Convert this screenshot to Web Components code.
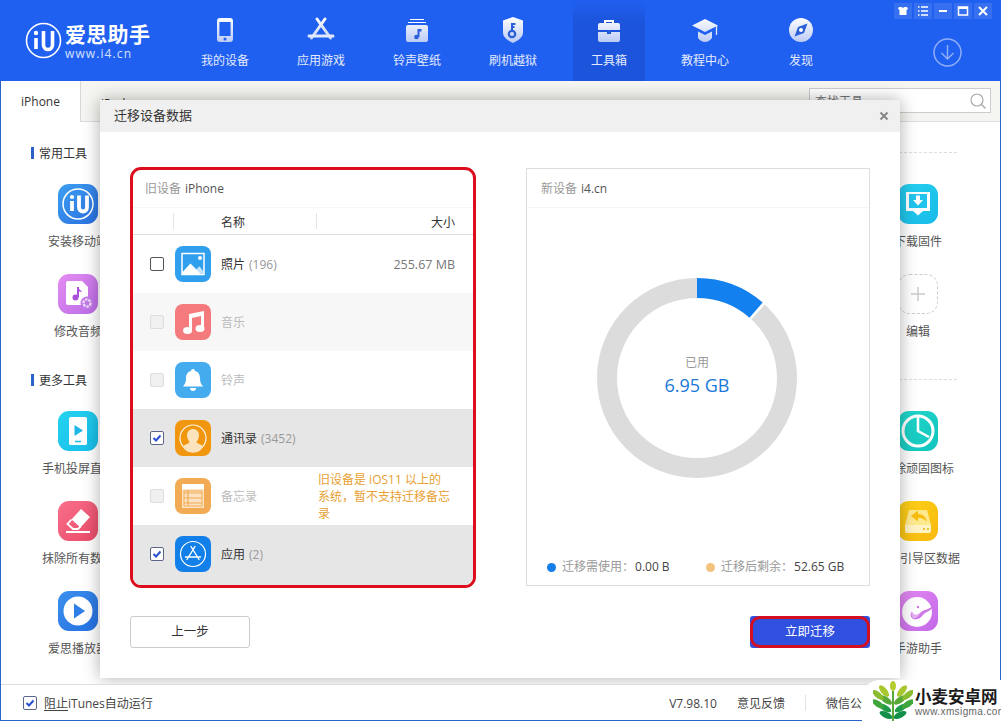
<!DOCTYPE html>
<html lang="zh">
<head>
<meta charset="utf-8">
<title>爱思助手</title>
<style>
  html, body { margin: 0; padding: 0; background: #fff; }
  body { font: 12px/18px "Open Sans", "Noto Sans CJK SC", sans-serif; color: #333; width: 1001px; height: 721px; overflow: hidden; }
</style>
</head>
<body>
<i4-app>
  <i4-header slot="header">
    <i4-nav label="我的设备" icon="phone"></i4-nav>
    <i4-nav label="应用游戏" icon="store"></i4-nav>
    <i4-nav label="铃声壁纸" icon="ring"></i4-nav>
    <i4-nav label="刷机越狱" icon="shield"></i4-nav>
    <i4-nav label="工具箱" icon="box" active></i4-nav>
    <i4-nav label="教程中心" icon="hat"></i4-nav>
    <i4-nav label="发现" icon="compass"></i4-nav>
  </i4-header>
  <i4-tabs slot="tabs"></i4-tabs>
  <i4-section title="常用工具">
    <i4-tool-row><i4-tool label="安装移动端" icon="iu"></i4-tool><i4-tool label="下载固件" icon="firmware"></i4-tool></i4-tool-row>
    <i4-tool-row><i4-tool label="修改音频" icon="audio"></i4-tool><i4-tool label="编辑" icon="add"></i4-tool></i4-tool-row>
  </i4-section>
  <i4-section title="更多工具" style="margin-top:7px">
    <i4-tool-row><i4-tool label="手机投屏直播" icon="cast"></i4-tool><i4-tool label="删除顽固图标" icon="clock"></i4-tool></i4-tool-row>
    <i4-tool-row><i4-tool label="抹除所有数据" icon="erase"></i4-tool><i4-tool label="修复引导区数据" icon="disk"></i4-tool></i4-tool-row>
    <i4-tool-row><i4-tool label="爱思播放器" icon="play"></i4-tool><i4-tool label="手游助手" icon="game"></i4-tool></i4-tool-row>
  </i4-section>
  <i4-footer slot="footer"></i4-footer>
  <i4-dialog slot="overlay"></i4-dialog>
  <i4-watermark slot="overlay"></i4-watermark>
</i4-app>

<script>
const FONT = '"Open Sans", "Noto Sans CJK SC", sans-serif';

/* header icons, 30x30 box, white fading to pale blue */
const navFill = `<defs><linearGradient id="g" gradientUnits="userSpaceOnUse" x1="0" y1="2" x2="0" y2="28"><stop offset="0" stop-color="#fff"/><stop offset="1" stop-color="#b9c9f5"/></linearGradient></defs>`;
const NAV = {
  phone: `<path fill="url(#g)" fill-rule="evenodd" d="M10 3h10a3 3 0 0 1 3 3v18a3 3 0 0 1-3 3H10a3 3 0 0 1-3-3V6a3 3 0 0 1 3-3zm-.6 4v14h11.200V7z"/><circle cx="15" cy="24" r="1.500" fill="#2060f0"/>`,
  store: `<path fill="none" stroke="url(#g)" stroke-width="3" stroke-linecap="round" d="M11 4l13.500 19M19 4L5.500 23"/><path fill="none" stroke="#e2e9fd" stroke-width="3" stroke-linecap="round" d="M3 21h24"/>`,
  ring: `<path fill="#fff" d="M8 4h14v1H8zM6 7h18v1H6z"/><rect x="4" y="10" width="22" height="17" rx="2" fill="url(#g)"/><path fill="none" stroke="#2a5fd8" stroke-width="2" d="M16.500 14v8"/><circle cx="14.500" cy="22" r="2.300" fill="#2a5fd8"/><path d="M16.500 14h3v2.500h-3z" fill="#2a5fd8"/>`,
  shield: `<path fill="url(#g)" d="M15 2l10 3.500v12c0 5-5 8-10 10.500C10 25.500 5 22.500 5 17.500v-12z"/><circle cx="14" cy="19" r="3.200" fill="none" stroke="#2a5fd8" stroke-width="2.200"/><path d="M14 16V8M14 9h3.500M14 12h2.500" fill="none" stroke="#2a5fd8" stroke-width="2"/>`,
  box: `<path fill="none" stroke="#fff" stroke-width="2" d="M11 9V6h8v3"/><path fill="url(#g)" d="M6 8h18a2 2 0 0 1 2 2v5H4v-5a2 2 0 0 1 2-2zM4 17h9v2h4v-2h9v8a2 2 0 0 1-2 2H6a2 2 0 0 1-2-2z"/><rect x="13.700" y="15" width="2.600" height="3" fill="#2a5fd8"/>`,
  hat: `<path fill="url(#g)" d="M15 4l13 6.500L15 17 2 10.500zM8 16.500l7 3.500 7-3.500V23c-2 2.500-4.500 4-7 4s-5-1.500-7-4z"/><path fill="none" stroke="#dfe7fb" stroke-width="1.300" d="M26.500 11v9"/>`,
  compass: `<circle cx="15" cy="15" r="12" fill="url(#g)"/><path fill="#2a5fd8" d="M21.500 8.500L18 18l-9.500 3.500L12 12z"/><circle cx="15" cy="15" r="2" fill="#fff"/>`
};

/* tool tiles, 40x40 */
const tile = (a, b, body) => `<svg viewBox="0 0 40 40" width="40" height="40"><defs><linearGradient id="t" x1="0" y1="0" x2="1" y2="1"><stop offset="0" stop-color="${a}"/><stop offset="1" stop-color="${b}"/></linearGradient></defs><rect width="40" height="40" rx="11" fill="url(#t)"/>${body}</svg>`;
const TOOL = {
  iu: tile('#3d9ff0', '#2a6fe0', `<circle cx="20" cy="20" r="15" fill="none" stroke="#fff" stroke-width="1.500"/><path fill="none" stroke="#fff" stroke-width="3.800" d="M14 17v10M21 11.500v12a4 4 0 0 0 8 0v-12"/><circle cx="14" cy="13" r="2.100" fill="#fff"/>`),
  audio: tile('#e58cf2', '#b96be6', `<path fill="#fff" d="M10 7h14l6 6v16a2 2 0 0 1-2 2H10a2 2 0 0 1-2-2V9a2 2 0 0 1 2-2z"/><path fill="none" stroke="#a94fdc" stroke-width="2" d="M20 13v10"/><circle cx="17.500" cy="23.500" r="3" fill="#a94fdc"/><path fill="#a94fdc" d="M20 13c1 3 3 3 4 5-2 0-3-1-4-1z"/><circle cx="29" cy="29" r="6.500" fill="#c27ae8"/><circle cx="29" cy="29" r="3.500" fill="none" stroke="#f0dcf8" stroke-width="2.400" stroke-dasharray="2.500 1"/>`),
  cast: tile('#25d3f0', '#18bce8', `<rect x="11" y="6" width="18" height="28" rx="1.500" fill="#fff"/><path fill="#1eb8e6" d="M16.500 14l8.500 5.500-8.500 5.500z"/><path stroke="#1eb8e6" stroke-width="1.500" d="M17 30.500h6"/>`),
  erase: tile('#f8708c', '#ea4a68', `<path fill="#fff" d="M23 8l9 8-9.500 10.500-9-8z"/><path fill="none" stroke="#fff" stroke-width="1.800" d="M13.500 18.500l-4 4.500 5.500 5h5l2.500-2.500"/><path stroke="#fff" stroke-width="2" d="M8 31h24"/>`),
  play: tile('#3b8fec', '#2670e2', `<circle cx="20" cy="20" r="14.500" fill="#fff"/><path fill="#2f7fe6" d="M16 12.500L27 20l-11 7.500z"/>`),
  firmware: tile('#26d0f0', '#18bbe8', `<path fill="#fff" d="M8 8h24v19h-7l-5 4.500-5-4.500H8z"/><rect x="11" y="10" width="18" height="14" fill="#22c4ec"/><path fill="#fff" d="M18 11.500h4v4.500h3l-5 5.500-5-5.500h3z"/>`),
  add: `<svg viewBox="0 0 40 40" width="40" height="40"><rect x=".5" y=".5" width="39" height="39" rx="11" fill="#fff" stroke="#ccc" stroke-dasharray="3 2"/><path stroke="#ccc" stroke-width="1.500" d="M20 13v14M13 20h14"/></svg>`,
  clock: tile('#22d8cc', '#12c4bc', `<circle cx="20" cy="20" r="15" fill="none" stroke="#fff" stroke-width="3"/><path fill="none" stroke="#fff" stroke-width="2.500" d="M20 6v14l11 6"/>`),
  disk: tile('#fdd21a', '#f8b80e', `<path fill="#ffe98e" d="M7 24l4-15h18l4 15z"/><path fill="#fff3c4" d="M7 24h26v6a2 2 0 0 1-2 2H9a2 2 0 0 1-2-2z"/><path fill="#f9bd10" d="M13 15l7-5.500v3.500c5 0 8 3 9 8-3-3.500-5-4-9-4v3.500z"/><circle cx="26" cy="28" r="1" fill="#f0b010"/><circle cx="30" cy="28" r="1" fill="#f0b010"/>`),
  game: tile('#e48af2', '#c268e8', `<circle cx="19" cy="21" r="15" fill="#fff"/><path fill="#cf78e8" d="M36 14C33 21 28 20 25 24c-3 4-8 6-11 3-2-2-1.500-5 0-6.500 1 4 5 4.500 8 1.500 4-4 9-3 14-8z"/><path fill="#e3b0f2" d="M15 27c-2-2-1.500-5-1-6.500 1 4 5 4.500 8 1.500-1 3-4 6-7 5z"/><circle cx="20" cy="16" r="1.200" fill="#cf78e8"/>`)
};

/* device data rows, 36x36 */
const app = (c, body) => `<svg viewBox="0 0 36 36" width="36" height="36"><rect width="36" height="36" rx="8" fill="${c}"/>${body}</svg>`;
const APP = {
  photos: app('#2f9fee', `<rect x="7" y="7.500" width="22" height="21" fill="none" stroke="#fff" stroke-width="1.500"/><path fill="#fff" d="M7.500 26l8-8.500 6 6 3-3 4 5.500v2h-21z"/><path fill="#bfe2fa" d="M21.500 23.500l3-3 4 5.500v2h-3z"/><circle cx="25" cy="12" r="2" fill="#fff"/>`),
  music: app('#f57a7e', `<path fill="#fff" d="M14 10l15-3v17h-3V12l-9 2v13h-3z"/><ellipse cx="12.500" cy="26.500" rx="4.500" ry="3.500" fill="#fff"/><ellipse cx="25" cy="24.500" rx="4.500" ry="3.500" fill="#fff"/>`),
  bell: app('#44abef', `<path fill="#fff" d="M18 7a2 2 0 0 1 2 2c4 1 5 4 5 8 0 4 2 6 3 7.500H8c1-1.500 3-3.500 3-7.500 0-4 1-7 5-8a2 2 0 0 1 2-2z"/><path fill="#fff" d="M15 26h6a3 3 0 0 1-6 0z"/>`),
  person: app('#f0960f', `<circle cx="18" cy="18" r="13" fill="none" stroke="#fff" stroke-width="1.200" opacity=".9"/><path fill="#fbe3bd" d="M18 9c4 0 6 3 6 6.500 0 3-1.500 5-2.500 6.500 1 2 5 2.500 7 4.500a12 12 0 0 1-21 0c2-2 6-2.500 7-4.500-1-1.500-2.500-3.500-2.500-6.500C12 12 14 9 18 9z"/>`),
  notes: app('#f2aa55', `<rect x="7" y="6" width="22" height="24" fill="#fbe3c3"/><rect x="7" y="6" width="22" height="5" fill="#fff"/><path stroke="#f2aa55" stroke-width="1.200" d="M9 15h18M9 20h18M9 25h18M13 12v16" /><rect x="9" y="13" width="18" height="15" fill="none" stroke="#f2aa55" stroke-width="1"/>`),
  apps: app('#1280e8', `<circle cx="18" cy="18" r="12.500" fill="none" stroke="#fff" stroke-width="1.200"/><path fill="none" stroke="#fff" stroke-width="1.400" stroke-linecap="round" d="M16 10.500l8 13M20 10.500l-8 13M10.500 21h15"/>`)
};

class I4App extends HTMLElement {
  constructor() {
    super();
    this.attachShadow({ mode: "open" }).innerHTML = `
<style>
  :host { display: flex; flex-direction: column; width: 1001px; height: 721px; position: relative; box-sizing: border-box; overflow: hidden; font: 12px/18px ${FONT}; }
  .frame { flex: 1; display: flex; flex-direction: column; min-height: 0; border: 1px solid #2b62c8; border-width: 0 1px 1px; }
  main { flex: 1; min-height: 0; padding: 22px 22px 0 17px; background: #fff; overflow: hidden; }
  ::slotted([slot=header]), ::slotted([slot=footer]) { position: relative; z-index: 2; }
</style>
<slot name="header"></slot>
<div class="frame">
  <slot name="tabs"></slot>
  <main><slot></slot></main>
  <slot name="footer"></slot>
</div>
<slot name="overlay"></slot>`;
  }
}

class I4Header extends HTMLElement {
  constructor() {
    super();
    this.attachShadow({ mode: "open" }).innerHTML = `
<style>
  :host { display: flex; height: 81px; background: #2060f0; color: #e4ebfd; }
  .logo { width: 177px; flex: none; display: flex; align-items: center; padding: 0 0 0 25px; box-sizing: border-box; gap: 3px; }
  .name { font-weight: 700; font-size: 21px; line-height: 22px; letter-spacing: .3px; color: #fff; margin-top: 3px; }
  .url { font-size: 12px; line-height: 14px; letter-spacing: 1.100px; color: #d6e1fc; margin-top: 2px; }
  nav { display: flex; }
  .side { margin-left: auto; display: flex; flex-direction: column; align-items: flex-end; padding: 3px 9px 0 0; }
  .win { display: flex; gap: 2px; }
  .win span { width: 18px; height: 16px; background: rgba(255,255,255,.1); display: grid; place-items: center; }
  .dl { margin: 19px 30px 0 0; display: block; }
</style>
<div class="logo">
  <svg width="37" height="37" viewBox="0 0 37 37"><circle cx="18.500" cy="18.500" r="17" fill="none" stroke="#fff" stroke-width="1.600"/><path fill="none" stroke="#fff" stroke-width="3.600" d="M11 16v11M18.500 9v14a4.500 4.500 0 0 0 9 0V9"/><circle cx="11" cy="11" r="2.200" fill="#fff"/></svg>
  <div><div class="name">爱思助手</div><div class="url">www.i4.cn</div></div>
</div>
<nav><slot></slot></nav>
<div class="side">
  <div class="win">
    <span><svg width="12" height="12" viewBox="0 0 12 12"><path fill="#fff" d="M2 2h2.500c.5 1 2.500 1 3 0H10l1 2-1.500 1v5h-7V5L1 4z"/></svg></span>
    <span><svg width="12" height="12" viewBox="0 0 12 12"><path stroke="#fff" stroke-width="1.500" d="M1 2h1.500M4 2h7M1 6h1.500M4 6h7M1 10h1.500M4 10h7"/></svg></span>
    <span><svg width="12" height="12" viewBox="0 0 12 12"><path stroke="#fff" stroke-width="2" d="M2 6h8"/></svg></span>
    <span><svg width="12" height="12" viewBox="0 0 12 12"><rect x="1.500" y="2" width="9" height="8" fill="none" stroke="#fff" stroke-width="1.500"/><path stroke="#fff" stroke-width="2" d="M1.500 3h9"/></svg></span>
    <span><svg width="12" height="12" viewBox="0 0 12 12"><path stroke="#fff" stroke-width="2" d="M2 2l8 8M10 2l-8 8"/></svg></span>
  </div>
  <svg class="dl" width="29" height="29" viewBox="0 0 29 29"><circle cx="14.500" cy="14.500" r="13.500" fill="none" stroke="#8fadf7" stroke-width="1.500"/><path fill="none" stroke="#8fadf7" stroke-width="1.500" d="M14.500 7v14M8.500 15l6 6 6-6"/></svg>
</div>`;
  }
}

class I4Nav extends HTMLElement {
  connectedCallback() {
    if (this.shadowRoot) return;
    this.attachShadow({ mode: "open" }).innerHTML = `
<style>
  :host { display: flex; flex-direction: column; align-items: center; width: 96px; }
  .in { width: 72px; height: 81px; display: flex; flex-direction: column; align-items: center; padding-top: 15px; box-sizing: border-box; }
  :host([active]) .in { background: linear-gradient(#2060f0, #1c55dc 25%); }
  svg { display: block; }
  span { margin-top: 7px; font-size: 12px; line-height: 18px; white-space: nowrap; }
</style>
<div class="in">
  <svg width="30" height="30" viewBox="0 0 30 30">${navFill}${NAV[this.getAttribute('icon')]}</svg>
  <span>${this.getAttribute('label')}</span>
</div>`;
  }
}

class I4Tabs extends HTMLElement {
  constructor() {
    super();
    this.attachShadow({ mode: "open" }).innerHTML = `
<style>
  :host { display: flex; height: 41px; background: #f5f5f2; border-bottom: 1px solid #ddd; box-sizing: border-box; }
  .tab { width: 80px; height: 41px; background: #fff; border-right: 1px solid #d8d8d8; box-sizing: border-box; display: grid; place-items: center; font-size: 12px; color: #333; padding-top: 1px; }
  .t2 { margin-left: 20px; line-height: 45px; height: 39px; font-size: 12px; color: #333; }
  .search { margin: 7px 9px 0 auto; width: 182px; height: 25px; background: #fff; border: 1px solid #ccc; box-sizing: border-box; display: flex; align-items: center; justify-content: space-between; padding: 2px 3px 0 5px; color: #777; }
  .search svg { margin-top: -2px; }
</style>
<div class="tab">iPhone</div>
<div class="t2">iPad</div>
<div class="search"><span>查找工具</span>
  <svg width="18" height="18" viewBox="0 0 18 18"><circle cx="8" cy="8" r="6" fill="none" stroke="#aaa" stroke-width="1.200"/><path stroke="#aaa" stroke-width="1.400" d="M12.500 12.500l4 4"/></svg>
</div>`;
  }
}

class I4Section extends HTMLElement {
  connectedCallback() {
    if (this.shadowRoot) return;
    this.attachShadow({ mode: "open" }).innerHTML = `
<style>
  :host { display: block; }
  .title { display: flex; align-items: center; height: 18px; margin: 0 0 22px 13px; color: #333; }
  .title span { padding-top: 2px; }
  .bar { width: 3px; height: 12px; background: #2a62c8; margin-right: 5px; }
  .line { flex: 1; border-top: 1px dashed #ddd; margin: 0 21px 2px 20px; }
</style>
<div class="title"><i class="bar"></i><span>${this.getAttribute('title')}</span><i class="line"></i></div>
<slot></slot>`;
  }
}

class I4ToolRow extends HTMLElement {
  constructor() {
    super();
    this.attachShadow({ mode: "open" }).innerHTML = `
<style>:host { display: flex; justify-content: space-between; height: 90px; }</style><slot></slot>`;
  }
}

class I4Tool extends HTMLElement {
  connectedCallback() {
    if (this.shadowRoot) return;
    this.attachShadow({ mode: "open" }).innerHTML = `
<style>
  :host { display: flex; flex-direction: column; align-items: center; width: 120px; color: #555; }
  svg { display: block; flex: none; }
  span { margin-top: 9px; white-space: nowrap; }
</style>
${TOOL[this.getAttribute('icon')]}
<span>${this.getAttribute('label')}</span>`;
  }
}

class I4Check extends HTMLElement {
  connectedCallback() {
    if (this.shadowRoot) return;
    const on = this.hasAttribute('checked');
    this.attachShadow({ mode: "open" }).innerHTML = `
<style>
  :host { display: block; width: 14px; height: 14px; box-sizing: border-box; border: 1px solid #555; border-radius: 2px; background: #fff; flex: none; }
  :host([checked]) { border-color: #5c6788; }
  :host([disabled]) { border-color: #ddd; background: #f0f0f0; }
  svg { display: block; }
</style>
${on ? `<svg width="12" height="12" viewBox="0 0 12 12"><path fill="none" stroke="#2b50d0" stroke-width="2" d="M2.500 6l2.500 2.500 4.500-5"/></svg>` : ''}`;
  }
}

class I4Row extends HTMLElement {
  connectedCallback() {
    if (this.shadowRoot) return;
    const count = this.getAttribute('count'), size = this.getAttribute('size');
    this.attachShadow({ mode: "open" }).innerHTML = `
<style>
  :host { display: flex; align-items: center; height: 58px; flex: none; background: #fff; padding: 0 18px 0 17px; box-sizing: border-box; color: #333; }
  :host([tone=soft]) { background: #f7f7f7; }
  :host([tone=on]) { background: #e6e6e6; }
  :host(:last-child) { flex: 1; padding-bottom: 2px; }
  :host([disabled]) .name { color: #bbb; }
  svg { display: block; margin: 0 10px 0 11px; flex: none; }
  .name, .n, .size { padding-top: 2px; }
  .n { color: #999; margin-left: 4px; }
  .size { margin-left: auto; color: #777; font-size: 12.500px; }
  .note { margin-left: auto; width: 133px; margin-right: 4px; color: #e8a032; line-height: 17px; }
</style>
<i4-check ${this.hasAttribute('checked') ? 'checked' : ''} ${this.hasAttribute('disabled') ? 'disabled' : ''}></i4-check>
${APP[this.getAttribute('icon')]}
<span class="name">${this.getAttribute('label')}</span>${count ? `<span class="n">(${count})</span>` : ''}
${size ? `<span class="size">${size}</span>` : ''}<slot></slot>`;
    if (this.textContent.trim()) {
      const s = document.createElement('div');
      s.className = 'note';
      s.innerHTML = '<slot></slot>';
      this.shadowRoot.querySelector('slot').replaceWith(s);
    }
  }
}

class I4OldDevice extends HTMLElement {
  constructor() {
    super();
    this.attachShadow({ mode: "open" }).innerHTML = `
<style>
  :host { display: flex; flex-direction: column; width: 346px; height: 421px; box-sizing: border-box; border: 3px solid #dc0d1c; border-radius: 11px; overflow: hidden; background: #fff; flex: none; }
  .head { height: 38px; flex: none; display: flex; align-items: center; padding-left: 12px; color: #999; border-bottom: 1px solid #f6f6f6; box-sizing: border-box; }
  .head b { font-weight: 400; color: #555; margin-left: 4px; }
  .cols { height: 27px; flex: none; display: flex; align-items: center; border-bottom: 1px solid #ddd; box-sizing: border-box; color: #333; }
  .cols i { width: 1px; height: 16px; background: #e4e4e4; }
  .c0 { width: 40px; } .c1 { width: 143px; padding: 4px 0 0 47px; box-sizing: border-box; }
  .c2 { flex: 1; text-align: right; padding: 4px 18px 0 0; }
  .rows { flex: 1; display: flex; flex-direction: column; min-height: 0; }
</style>
<div class="head">旧设备<b>iPhone</b></div>
<div class="cols"><span class="c0"></span><i></i><span class="c1" style="margin-right:-1px">名称</span><i></i><span class="c2">大小</span></div>
<div class="rows"><slot></slot></div>`;
  }
}

class I4NewDevice extends HTMLElement {
  constructor() {
    super();
    this.attachShadow({ mode: "open" }).innerHTML = `
<style>
  :host { display: flex; flex-direction: column; width: 344px; height: 418px; margin-top: 1px; box-sizing: border-box; border: 1px solid #ddd; flex: none; }
  .head { height: 39px; flex: none; display: flex; align-items: center; padding: 2px 0 0 14px; color: #999; border-bottom: 1px solid #f5f5f5; box-sizing: border-box; }
  .head b { font-weight: 400; color: #555; margin-left: 4px; }
  .chart { display: grid; place-self: center; margin: 70px 2px 0 0; width: 200px; height: 200px; }
  .chart > * { grid-area: 1 / 1; }
  .mid { display: flex; flex-direction: column; align-items: center; justify-content: center; padding-top: 2px; }
  .mid span { color: #999; line-height: 18px; margin-top: -7px; }
  .mid b { font-weight: 400; font-size: 18px; line-height: 26px; color: #1a78d8; }
  .legend { margin-top: auto; height: 18px; margin-bottom: 9px; display: flex; padding-left: 20px; color: #999; }
  .legend div { display: flex; align-items: center; }
  .legend div:first-child { width: 159px; }
  .legend i { width: 9px; height: 9px; border-radius: 50%; margin-right: 6px; background: #1280e8; }
  .legend div + div i { background: #f2c27e; }
  .legend b { font-weight: 400; color: #444; margin-left: 1px; }
</style>
<div class="head">新设备<b>i4.cn</b></div>
<div class="chart">
  <svg width="200" height="200" viewBox="0 0 200 200">
    <circle cx="100" cy="100" r="90" fill="none" stroke="#dcdcdc" stroke-width="20"/>
    <g transform="rotate(-90 100 100)">
      <circle cx="100" cy="100" r="90" fill="none" stroke="#fff" stroke-width="20" stroke-dasharray="67 510"/>
      <circle cx="100" cy="100" r="90" fill="none" stroke="#1280ee" stroke-width="20" stroke-dasharray="64.400 510"/>
    </g>
  </svg>
  <div class="mid"><span>已用</span><b>6.95 GB</b></div>
</div>
<div class="legend">
  <div><i></i>迁移需使用：<b>0.00 B</b></div>
  <div><i></i>迁移后剩余：<b>52.65 GB</b></div>
</div>`;
  }
}

class I4Dialog extends HTMLElement {
  constructor() {
    super();
    this.attachShadow({ mode: "open" }).innerHTML = `
<style>
  :host { position: absolute; left: 100px; top: 100px; width: 800px; height: 578px; z-index: 1; background: #fff; display: flex; flex-direction: column; box-shadow: 0 0 16px rgba(0,0,0,.32); }
  .bar { height: 32px; flex: none; background: #f0f0f0; display: flex; align-items: center; justify-content: space-between; padding: 0 11px 0 14px; font-size: 13px; color: #333; }
  .bar span { margin-top: -2px; }
  .body { display: flex; justify-content: space-between; align-items: flex-start; padding: 35px 30px 0; }
  .foot { display: flex; justify-content: space-between; padding: 28px 30px 0; }
  button { font: 12.500px/18px ${FONT}; width: 120px; height: 32px; box-sizing: border-box; border-radius: 3px; border: 1px solid #ccc; background: #fff; color: #333; padding: 0; position: relative; }
  button.go { background: #3050e0; color: #fff; border: 0; }
  button.go::after { content: ""; position: absolute; inset: 0; border: 3px solid #d40f20; border-radius: 10px; }
</style>
<div class="bar"><span>迁移设备数据</span>
  <svg width="10" height="10" viewBox="0 0 10 10"><path stroke="#888" stroke-width="2" d="M1.500 1.500l7 7M8.500 1.500l-7 7"/></svg>
</div>
<div class="body">
  <i4-old-device>
    <i4-row icon="photos" label="照片" count="196" size="255.67 MB"></i4-row>
    <i4-row icon="music" label="音乐" tone="soft" disabled></i4-row>
    <i4-row icon="bell" label="铃声" disabled></i4-row>
    <i4-row icon="person" label="通讯录" count="3452" tone="on" checked></i4-row>
    <i4-row icon="notes" label="备忘录" disabled>旧设备是 iOS11 以上的系统，暂不支持迁移备忘录</i4-row>
    <i4-row icon="apps" label="应用" count="2" tone="on" checked></i4-row>
  </i4-old-device>
  <i4-new-device></i4-new-device>
</div>
<div class="foot"><button>上一步</button><button class="go">立即迁移</button></div>`;
  }
}

class I4Footer extends HTMLElement {
  constructor() {
    super();
    this.attachShadow({ mode: "open" }).innerHTML = `
<style>
  :host { display: flex; align-items: center; height: 36px; flex: none; background: #fff; border-top: 1px solid #ddd; box-sizing: border-box; padding: 0 114px 0 22px; color: #444; }
  i4-check { margin-right: 7px; }
  span { padding-top: 2px; }
  u { text-underline-offset: 2px; }
  .right { margin-left: auto; display: flex; align-items: center; }
  .sep { width: 1px; height: 16px; background: #e2e2e2; margin: 0 20px; }
  .v { margin-right: 20px; }
</style>
<i4-check checked></i4-check><span><u>阻止</u>iTunes自动运行</span>
<div class="right"><span class="v">V7.98.10</span><span>意见反馈</span><i class="sep"></i><span>微信公众号</span></div>`;
  }
}

class I4Watermark extends HTMLElement {
  constructor() {
    super();
    const leaf = (x, y, r, c) => `<ellipse cx="${x}" cy="${y}" rx="7" ry="3" fill="${c}" transform="rotate(${r} ${x} ${y})"/>`;
    this.attachShadow({ mode: "open" }).innerHTML = `
<style>
  :host { position: absolute; right: 0; bottom: 0; width: 139px; height: 41px; z-index: 3; background: #fff; border-top-left-radius: 18px; display: flex; align-items: center; padding-left: 11px; box-sizing: border-box; gap: 2px; }
  svg { flex: none; }
  .big { font: 700 16.500px/19px ${FONT}; color: #1b1b1b; white-space: nowrap; margin-top: 3px; }
  .small { font: 10px/11px "Liberation Sans", sans-serif; letter-spacing: .4px; color: #666; white-space: nowrap; }
</style>
<svg width="40" height="40" viewBox="0 0 40 40">
  <ellipse cx="20" cy="5" rx="3" ry="5" fill="#b6cc2e"/>
  ${leaf(11,10,50,'#a8c62e')}${leaf(29,10,-50,'#a8c62e')}
  ${leaf(13,19,35,'#58a838')}${leaf(27,19,-35,'#58a838')}${leaf(5,14,40,'#8abc30')}${leaf(35,14,-40,'#8abc30')}
  ${leaf(12,27,30,'#1e9a48')}${leaf(28,27,-30,'#1e9a48')}${leaf(5,23,35,'#3ea63c')}${leaf(35,23,-35,'#3ea63c')}
  ${leaf(13,34,25,'#12904a')}${leaf(27,34,-25,'#12904a')}
  <rect x="19" y="10" width="2" height="30" fill="#5aa838"/>
</svg>
<div><div class="big">小麦安卓网</div><div class="small">www.xmsigma.com</div></div>`;
  }
}

customElements.define("i4-app", I4App);
customElements.define("i4-header", I4Header);
customElements.define("i4-nav", I4Nav);
customElements.define("i4-tabs", I4Tabs);
customElements.define("i4-section", I4Section);
customElements.define("i4-tool-row", I4ToolRow);
customElements.define("i4-tool", I4Tool);
customElements.define("i4-check", I4Check);
customElements.define("i4-row", I4Row);
customElements.define("i4-old-device", I4OldDevice);
customElements.define("i4-new-device", I4NewDevice);
customElements.define("i4-dialog", I4Dialog);
customElements.define("i4-footer", I4Footer);
customElements.define("i4-watermark", I4Watermark);
</script>
</body>
</html>
